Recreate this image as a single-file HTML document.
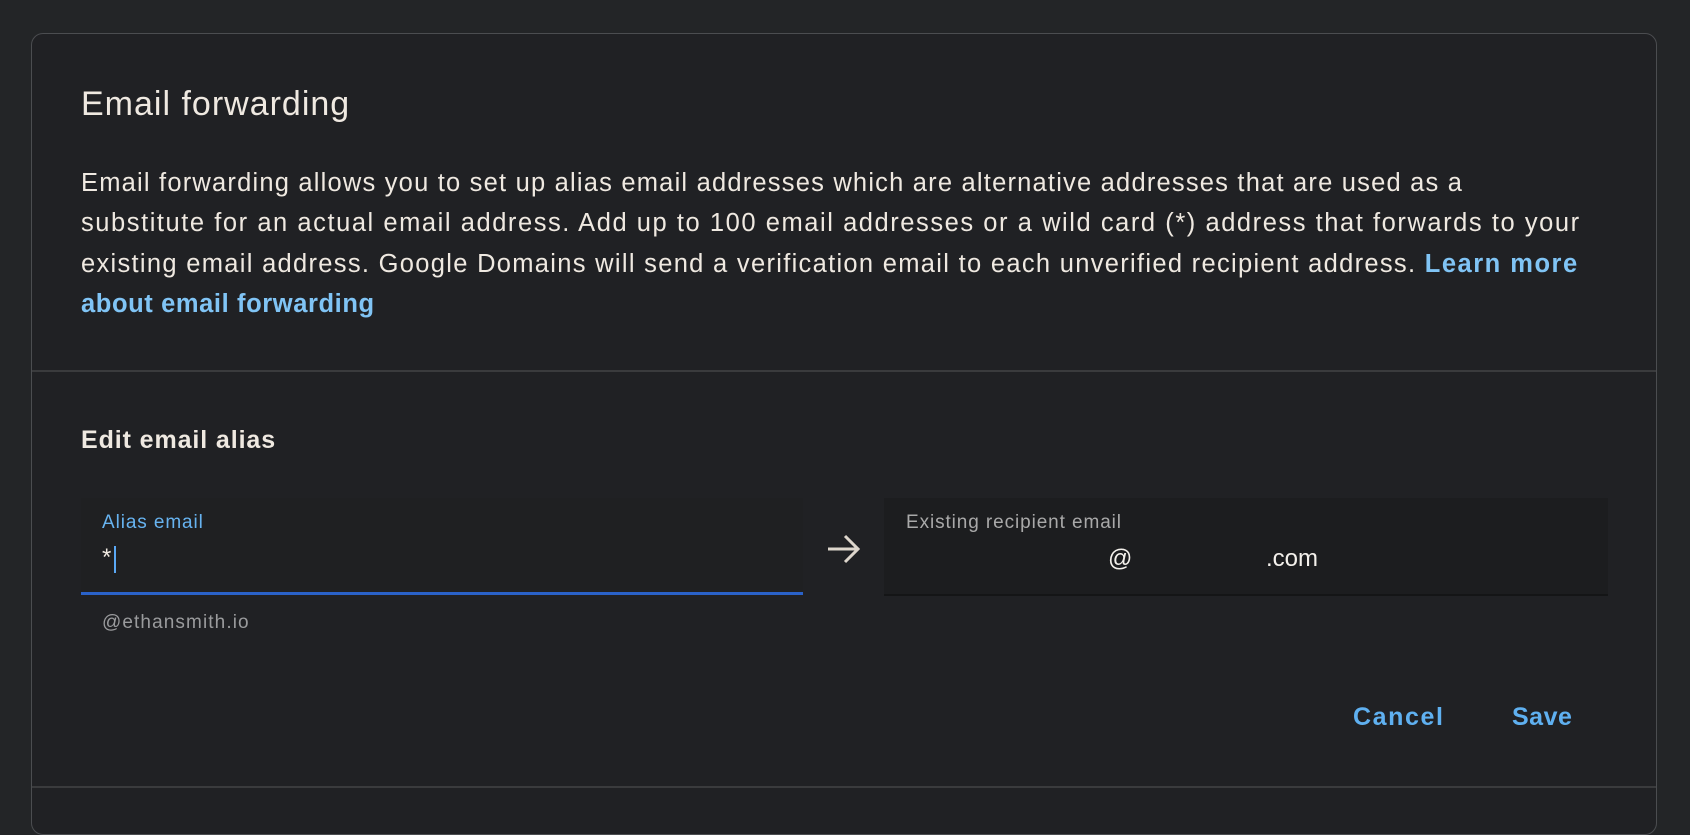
<!DOCTYPE html>
<html><head><meta charset="utf-8"><style>
html,body{margin:0;padding:0;}
body{width:1690px;height:790px;background:#232527;overflow:hidden;position:relative;font-family:"Liberation Sans",Arial,sans-serif;}
.card{position:absolute;left:31px;top:33px;width:1624px;height:800px;background:#202124;border:1.5px solid #4b4d50;border-radius:12px;}
.abs{position:absolute;white-space:nowrap;}
.t{color:#efe9e1;}
</style></head><body>
<div class="card"></div>
<div class="abs t" style="left:81px;top:85px;font-size:34px;letter-spacing:1px;">Email forwarding</div>
<div class="abs t" style="left:81px;top:163px;font-size:25.5px;line-height:40.4px;letter-spacing:1.3px;">
<span style="letter-spacing:1.2px">Email forwarding allows you to set up alias email addresses which are alternative addresses that are used as a</span><br>
<span style="letter-spacing:1.55px">substitute for an actual email address. Add up to 100 email addresses or a wild card (*) address that forwards to your</span><br>
existing email address. Google Domains will send a verification email to each unverified recipient address. <span style="color:#80c4f5;font-weight:bold;letter-spacing:1.5px;">Learn more</span><br>
<span style="color:#80c4f5;font-weight:bold;letter-spacing:0.6px;">about email forwarding</span></div>
<div class="abs" style="left:32px;top:370px;width:1624px;height:2px;background:#3a3b3d;"></div>
<div class="abs t" style="left:81px;top:426px;font-size:25px;font-weight:bold;letter-spacing:0.9px;">Edit email alias</div>

<div class="abs" style="left:81px;top:498px;width:722px;height:94px;background:#1f2022;"></div>
<div class="abs" style="left:81px;top:592px;width:722px;height:3px;background:#2a62c9;"></div>
<div class="abs" style="left:102px;top:512px;font-size:19px;letter-spacing:0.9px;color:#67b3f0;">Alias email</div>
<div class="abs t" style="left:102px;top:544px;font-size:24px;">*</div>
<div class="abs" style="left:114px;top:546px;width:1.5px;height:27px;background:#5aa8f5;"></div>
<div class="abs" style="left:102px;top:612px;font-size:19px;letter-spacing:1.1px;color:#9a9b9d;">@ethansmith.io</div>

<svg class="abs" style="left:826px;top:533px" width="36" height="32" viewBox="0 0 36 32"><path d="M2 16H32M19 3L32 16L19 29" fill="none" stroke="#ddd6cc" stroke-width="3"/></svg>

<div class="abs" style="left:884px;top:498px;width:724px;height:96px;background:#1c1d1f;"></div>
<div class="abs" style="left:884px;top:594px;width:724px;height:2px;background:#141516;"></div>
<div class="abs" style="left:906px;top:512px;font-size:19px;letter-spacing:0.9px;color:#a9a9a9;">Existing recipient email</div>
<div class="abs" style="left:1108px;top:545px;font-size:24px;color:#f4f1ec;">@</div>
<div class="abs" style="left:1266px;top:545px;font-size:24px;color:#f4f1ec;">.com</div>

<div class="abs" style="left:1353px;top:703px;font-size:25px;font-weight:bold;letter-spacing:1.6px;color:#5fb0f0;">Cancel</div>
<div class="abs" style="left:1512px;top:703px;font-size:25px;font-weight:bold;letter-spacing:0.5px;color:#5fb0f0;">Save</div>
<div class="abs" style="left:32px;top:786px;width:1624px;height:2px;background:#3a3b3d;"></div>
</body></html>
